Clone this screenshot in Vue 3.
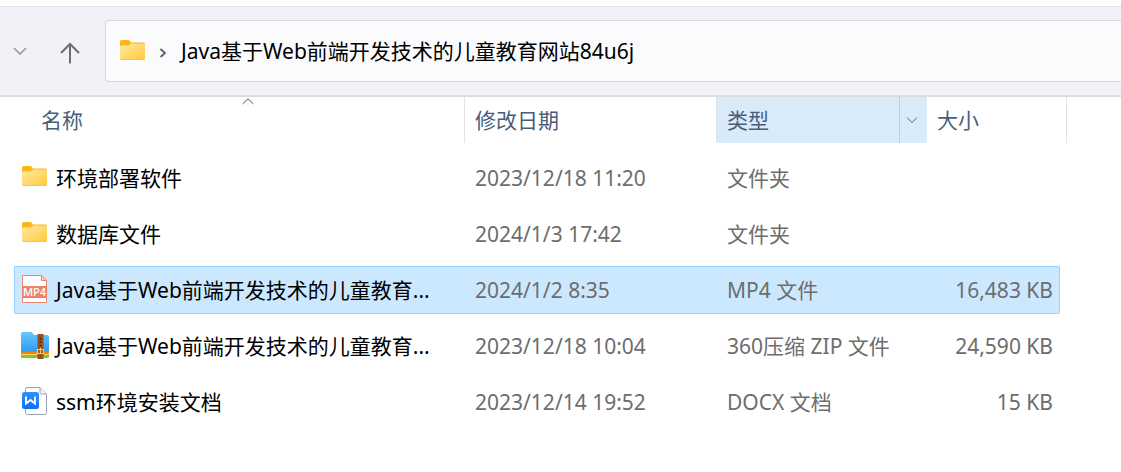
<script setup>
const files = [
  { name: '环境部署软件', icon: 'folder', date: '2023/12/18 11:20', type: '文件夹', size: '' },
  { name: '数据库文件', icon: 'folder', date: '2024/1/3 17:42', type: '文件夹', size: '' },
  { name: 'Java基于Web前端开发技术的儿童教育...', icon: 'mp4', date: '2024/1/2 8:35', type: 'MP4 文件', size: '16,483 KB', selected: true },
  { name: 'Java基于Web前端开发技术的儿童教育...', icon: 'zip', date: '2023/12/18 10:04', type: '360压缩 ZIP 文件', size: '24,590 KB' },
  { name: 'ssm环境安装文档', icon: 'doc', date: '2023/12/14 19:52', type: 'DOCX 文档', size: '15 KB' },
]
</script>

<template>
  <div class="explorer">
    <svg class="defs" width="0" height="0" aria-hidden="true">
      <defs>
        <linearGradient id="gold" x1="0" y1="0" x2="1" y2="1">
          <stop offset="0" stop-color="#ffe9a2" />
          <stop offset="1" stop-color="#ffca3c" />
        </linearGradient>
        <linearGradient id="sky" x1="0" y1="0" x2="0" y2="1">
          <stop offset="0" stop-color="#6ac6fb" />
          <stop offset="1" stop-color="#2f9df0" />
        </linearGradient>
        <linearGradient id="word" x1="0" y1="0" x2="0" y2="1">
          <stop offset="0" stop-color="#2f92ff" />
          <stop offset="1" stop-color="#1070f0" />
        </linearGradient>
        <symbol id="folder" viewBox="0 -1 28 28">
          <path d="M1 3.500Q1 2 2.500 2H9.500Q10.500 2 12 4.500H24.500Q26 4.500 26 6V12H1Z" fill="#fab71b" />
          <path d="M1 8.500Q1 7.500 2 7.500H9.500L12 5.500H25Q26 5.500 26 6.500V20.500Q26 22 24.500 22H2.500Q1 22 1 20.500Z" fill="url(#gold)" />
          <path d="M2 21.500H25" stroke="#f6c34b" />
        </symbol>
        <symbol id="mp4" viewBox="0 0 28 28">
          <path d="M1.500 .5H20.500L25.500 5.500V27.500H1.500Z" fill="#fff" stroke="#e98672" />
          <path d="M20.500 .5V5.500H25.500Z" fill="#fbd6cf" stroke="#e98672" />
          <path d="M1 11H26V23H1Z" fill="#ec826c" />
          <text class="badge" x="13.500" y="21" text-anchor="middle">MP4</text>
        </symbol>
        <symbol id="zip" viewBox="0 0 28 28">
          <path d="M0 18H28V25.500Q28 27 26.500 27H1.500Q0 27 0 25.500Z" fill="#7cc72b" />
          <path d="M0 17H28V22.500Q28 24 26.500 24H1.500Q0 24 0 22.500Z" fill="#f6e04e" />
          <path d="M0 16H28V21.500Q28 23 26.500 23H1.500Q0 23 0 21.500Z" fill="#f57b20" />
          <path d="M0 3Q0 1 2 1H10Q11 1 12 2.500L13 4H26Q28 4 28 6V18.500Q28 20.500 26 20.500H2Q0 20.500 0 18.500Z" fill="url(#sky)" />
          <path d="M16.500 3H22.500V28H16.500Z" fill="#95501f" />
          <path d="M19.500 7V8.500M19.500 10.500V12M19.500 14V15.500" stroke="#43230f" stroke-width="1.500" />
          <path d="M16.500 18.500H22.500V22.500H16.500ZM19.500 16.500V22" fill="none" stroke="#ffca55" stroke-width="1.200" />
        </symbol>
        <symbol id="doc" viewBox="0 0 28 28">
          <path d="M6 .5H19L25.500 7V25.500Q25.500 27.500 23.500 27.500H6.500Q4.500 27.500 4.500 25.500V2Q4.500 .5 6 .5Z" fill="#fff" stroke="#98a1b3" />
          <path d="M19 .5V5.500Q19 7 20.500 7H25.500" fill="#f1f3f7" stroke="#98a1b3" />
          <rect x="1" y="5" width="17" height="17" rx="2.500" fill="url(#word)" />
          <path d="M5 9.500V16.500L9.500 13 14 16.500V9.500" fill="none" stroke="#fff" stroke-width="1.900" />
        </symbol>
      </defs>
    </svg>

    <header class="toolbar">
      <button class="tool recent" type="button" aria-label="最近浏览的位置">
        <svg width="14" height="10" viewBox="0 0 14 10"><path d="M1 2L7 8L13 2" fill="none" stroke="#999b9f" stroke-width="1.600" /></svg>
      </button>
      <button class="tool up" type="button" aria-label="上移">
        <svg width="22" height="22" viewBox="0 0 22 22"><path d="M11 21.500V2M2 11L11 2L20 11" fill="none" stroke="#6d6e71" stroke-width="2" /></svg>
      </button>
      <nav class="address" aria-label="地址">
        <svg class="icon" width="28" height="28"><use href="#folder" /></svg>
        <svg class="sep" width="8" height="12" viewBox="0 0 8 12"><path d="M1.500 2L6 6L1.500 10" fill="none" stroke="#5f6063" stroke-width="1.800" /></svg>
        <a class="crumb" href="#">Java基于Web前端开发技术的儿童教育网站84u6j</a>
      </nav>
    </header>

    <main class="listing">
      <table>
        <colgroup>
          <col class="c-name"><col class="c-date"><col class="c-type"><col class="c-size"><col class="c-end">
        </colgroup>
        <thead>
          <tr>
            <th scope="col" aria-sort="ascending">
              <div class="head head-name">
                名称
                <svg class="sort" width="12" height="7" viewBox="0 0 12 7"><path d="M.5 6L6 .8L11.500 6" fill="none" stroke="#555" /></svg>
              </div>
            </th>
            <th scope="col"><div class="head">修改日期</div></th>
            <th scope="col">
              <div class="head hovered">
                <span>类型</span>
                <button class="filter" type="button" aria-label="筛选类型">
                  <svg width="12" height="8" viewBox="0 0 12 8"><path d="M1 1.500L6 6.500L11 1.500" fill="none" stroke="#5b6874" /></svg>
                </button>
              </div>
            </th>
            <th scope="col" colspan="2"><div class="head">大小</div></th>
          </tr>
        </thead>
        <tbody>
          <tr v-for="(f, i) in files" :key="i" :class="{ selected: f.selected }">
            <td>
              <div class="cell name">
                <svg class="icon" width="28" height="28"><use :href="'#' + f.icon" /></svg>
                <span>{{ f.name }}</span>
              </div>
            </td>
            <td><div class="cell">{{ f.date }}</div></td>
            <td><div class="cell">{{ f.type }}</div></td>
            <td><div class="cell size">{{ f.size }}</div></td>
          </tr>
        </tbody>
      </table>
    </main>
  </div>
</template>

<style>
body {
  margin: 0;
  background: #fff;
}
</style>

<style scoped>
.explorer {
  padding-top: 6px;
  overflow: hidden;
  font-family: "Noto Sans", "Noto Sans CJK SC", sans-serif;
  font-size: 21px;
  line-height: 28px;
  color: #6d6d6d;
}
.defs {
  position: absolute;
}
.badge {
  fill: #fff;
  font-family: "Open Sans", sans-serif;
  font-size: 11px;
  font-weight: 600;
}
button {
  padding: 0;
  border: 0;
  background: none;
  font: inherit;
}
svg {
  display: block;
  flex: none;
}
.toolbar {
  display: flex;
  align-items: center;
  padding: 13px 0;
  border-top: 1px solid #e4e5e9;
  border-bottom: 2px solid #dcdde3;
  background: #f0f2f8;
}
.tool {
  display: flex;
  align-items: center;
  justify-content: center;
  height: 40px;
}
.recent {
  width: 39px;
}
.up {
  width: 40px;
  margin: 4px 15px 0 11px;
}
.address {
  display: flex;
  flex: 1;
  align-items: center;
  height: 60px;
  padding-left: 13px;
  border: 1px solid #d7d8dc;
  border-right: 0;
  border-radius: 4px 0 0 4px;
  background: #fbfbfd;
}
.sep {
  margin: 4px 14px 0 12px;
}
.crumb {
  color: #000;
  text-decoration: none;
  white-space: nowrap;
}
.listing {
  padding-left: 14px;
}
table {
  table-layout: fixed;
  width: 1053px;
  border-collapse: separate;
  border-spacing: 0;
}
.c-name { width: 451px; }
.c-date { width: 252px; }
.c-type { width: 210px; }
.c-size { width: 133px; }
.c-end { width: 7px; }
th {
  padding: 0 0 7px;
  font-weight: 400;
  text-align: left;
}
td {
  padding: 4px 0;
}
.head {
  position: relative;
  display: flex;
  align-items: center;
  height: 46px;
  padding-left: 10px;
  border-right: 1px solid #e2e2e2;
  color: #4a5d7c;
}
.head-name {
  padding-left: 27px;
}
.sort {
  position: absolute;
  top: 1px;
  left: 228px;
}
.hovered {
  justify-content: space-between;
  border-right: 0;
  border-radius: 0 0 2px 2px;
  background: #d9ebf9;
}
.filter {
  display: flex;
  align-items: center;
  justify-content: center;
  width: 28px;
  height: 46px;
  padding-right: 3px;
  border-left: 1px solid #bcd0e0;
}
.cell {
  box-sizing: border-box;
  display: flex;
  align-items: center;
  height: 48px;
  padding-left: 10px;
  border: 0 solid transparent;
  border-width: 1px 0;
  white-space: nowrap;
}
.name {
  gap: 7px;
  padding-left: 6px;
  border-left-width: 1px;
  border-radius: 2px 0 0 2px;
  color: #000;
}
.name .icon {
  margin-bottom: 2px;
}
.size {
  justify-content: flex-end;
  padding-right: 6px;
  border-right-width: 1px;
  border-radius: 0 2px 2px 0;
}
.selected .cell {
  border-color: #99d1ff;
  background: #cce8ff;
}
</style>
